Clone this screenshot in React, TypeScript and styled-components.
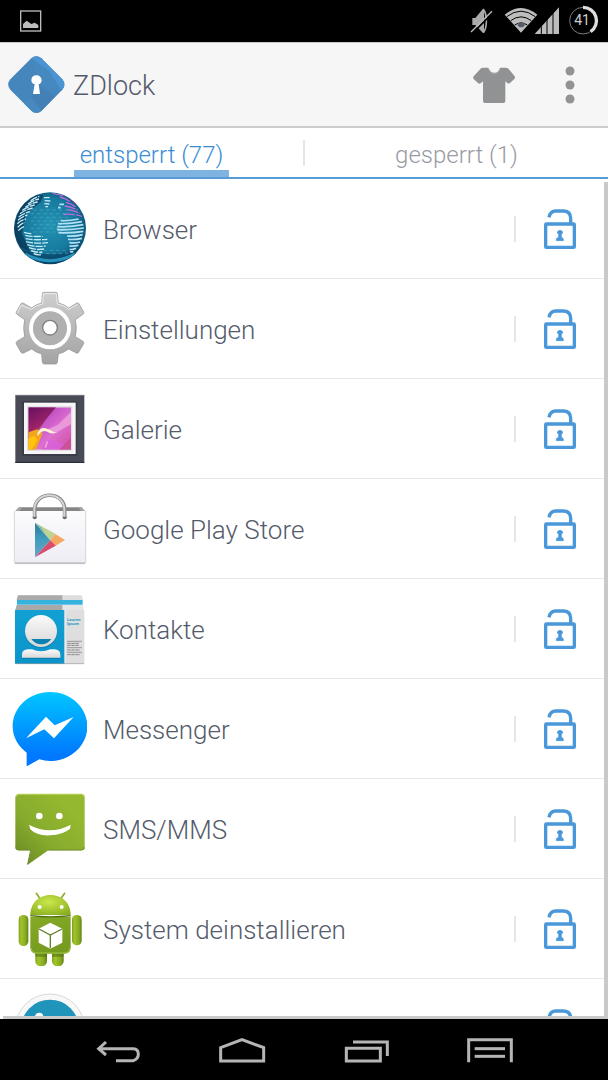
import React from 'react';
import styled, { createGlobalStyle } from 'styled-components';

const GlobalStyle = createGlobalStyle`
  *, *::before, *::after { box-sizing: border-box; }
  body { margin: 0; background: #fff; font-family: Roboto, 'Liberation Sans', sans-serif; font-weight: 300; }
  button { font: inherit; color: inherit; background: none; border: 0; padding: 0; cursor: pointer; }
  svg { display: block; flex: none; }
`;

const Screen = styled.div`
  display: flex;
  flex-direction: column;
  height: 100vh;
  overflow: hidden;
`;

const StatusBar = styled.div`
  display: flex;
  flex: none;
  align-items: center;
  justify-content: space-between;
  height: 42px;
  padding: 0 8px 0 20px;
  background: #000;
`;

const Header = styled.header`
  display: flex;
  flex: none;
  align-items: center;
  height: 86px;
  padding-left: 8px;
  background: #f6f6f6;
  border-top: 1px solid #c9c9c9;
  border-bottom: 2px solid #ccc;
`;

const Title = styled.h1`
  flex: 1;
  margin: 0;
  padding: 3px 0 0 8px;
  font-size: 27px;
  line-height: 32px;
  font-weight: 300;
  color: #545b6b;
`;

const HeaderButton = styled.button`
  display: flex;
  align-items: center;
  justify-content: center;
  width: 76px;
  height: 76px;
`;

const Tabs = styled.nav`
  display: flex;
  flex: none;
  align-items: stretch;
  height: 51px;
  border-bottom: 2px solid #559bd8;
`;

const Tab = styled.button`
  display: flex;
  flex: 1;
  justify-content: center;
`;

const TabLabel = styled.span<{ $active?: boolean }>`
  height: 49px;
  padding: 11px 6px 0;
  font-size: 24px;
  line-height: 32px;
  color: ${(p) => (p.$active ? '#3a8dd4' : '#989ba3')};
  border-bottom: 7px solid ${(p) => (p.$active ? '#80b4e0' : 'transparent')};
`;

const Separator = styled.span`
  flex: none;
  align-self: center;
  width: 2px;
  height: 26px;
  background: #e6e6e6;
`;

const ListArea = styled.main`
  display: flex;
  flex: 1;
  min-height: 0;
`;

const AppList = styled.ul`
  flex: 1;
  margin: 0;
  padding: 0;
  list-style: none;
  overflow: hidden;
`;

const Row = styled.li`
  display: flex;
  align-items: center;
  height: 100px;
  padding-left: 12px;
  border-bottom: 1px solid #e8e8e8;
`;

const AppName = styled.span`
  flex: 1;
  padding: 3px 0 0 16px;
  font-size: 26px;
  line-height: 32px;
  color: #545b6b;
`;

const LockButton = styled.button`
  display: flex;
  align-items: center;
  justify-content: center;
  width: 88px;
  height: 80px;
`;

const ScrollTrack = styled.div`
  flex: none;
  width: 4px;
  margin-top: 3px;
  background: #c9c9c9;
`;

const ListEdge = styled.div`
  flex: none;
  height: 3px;
  margin-left: 3px;
  background: #c9c9c9;
`;

const NavBar = styled.footer`
  display: flex;
  flex: none;
  height: 61px;
  padding: 3px 56px 0;
  background: #000;
`;

const NavButton = styled.button`
  display: flex;
  flex: 1;
  align-items: center;
  justify-content: center;
`;

const AppIcon = ({ children }: { children: React.ReactNode }) => (
  <svg width="75" height="75" viewBox="36 33 225 225" aria-hidden="true">{children}</svg>
);

const westLand = [
  'M92 62Q105 52 118 49', 'M84 72Q100 60 117 57', 'M76 82Q92 69 113 66', 'M67 91Q84 79 104 75',
  'M60 101Q78 88 98 84', 'M56 111Q72 99 90 95', 'M54 121Q66 110 82 105', 'M52 131Q64 120 78 117',
  'M53 142Q62 131 74 127', 'M55 152Q62 144 72 140', 'M72 157Q86 161 96 161', 'M76 166Q98 171 128 169',
  'M77 176Q102 181 142 178', 'M78 185Q104 192 144 188', 'M82 194Q104 202 137 198', 'M87 203Q108 211 132 207',
  'M93 212Q110 219 127 216', 'M101 221Q112 226 124 224', 'M132 53L149 53', 'M134 62L151 63', 'M133 71L148 72',
  'M136 80L144 80',
];
const eastLand = [
  'M182 122Q208 123 236 117', 'M174 131Q212 132 246 125', 'M172 140Q212 142 250 134', 'M171 149Q212 151 252 144',
  'M175 158Q214 160 250 154', 'M201 168Q226 170 248 164', 'M204 178Q226 180 246 175', 'M208 188Q226 190 240 186',
  'M208 198Q222 199 235 196', 'M209 208Q218 210 228 205', 'M210 216L220 215', 'M178 73L192 73', 'M174 83L182 83',
];
const pinkLand = [
  'M158 40Q175 42 190 48', 'M180 51Q198 56 209 64', 'M198 67Q214 70 226 80', 'M194 78Q212 80 233 90',
  'M202 89Q222 91 240 100', 'M190 103Q222 101 245 109',
];
const seaRows = [90, 101, 112, 123, 134, 145, 156, 211, 220];

const GlobeIcon = () => (
  <AppIcon>
    <defs>
      <radialGradient id="globe" cx="0.5" cy="0.45" r="0.56">
        <stop offset="0" stopColor="#2494b4" />
        <stop offset="0.65" stopColor="#177a9e" />
        <stop offset="1" stopColor="#0b4769" />
      </radialGradient>
      <clipPath id="globeClip"><circle cx="150" cy="145" r="107" /></clipPath>
    </defs>
    <circle cx="150" cy="145" r="108" fill="url(#globe)" />
    <g clipPath="url(#globeClip)" fill="none">
      <path d="M100 45L130 45 122 66 80 100 66 160 90 215 60 200 38 150 60 80Z" fill="#082d4c" opacity=".6" />
      <path d="M52 205Q150 242 248 205L220 250 150 262 80 250Z" fill="#083f63" opacity=".6" />
      <path d="M75 222Q150 262 225 222" stroke="#2da5cf" strokeWidth="9" opacity=".8" />
      {seaRows.map((y) => (
        <path key={y} d={`M${y % 2 ? 92 : 100} ${y}H205`} stroke="#51b3ca" strokeWidth="3" strokeDasharray="10 9" opacity=".55" />
      ))}
      {westLand.map((d) => <path key={d} d={d} stroke="#c6eaf7" strokeWidth="4" strokeDasharray="22 3" />)}
      {eastLand.map((d) => <path key={d} d={d} stroke="#b2e0f5" strokeWidth="5" />)}
      {pinkLand.map((d) => <path key={d} d={d} stroke="#c668e0" strokeWidth="4" strokeDasharray="34 4" />)}
      <path d="M176 38Q208 46 228 72" stroke="#c02bc4" strokeWidth="5" />
    </g>
  </AppIcon>
);

const GearIcon = () => (
  <AppIcon>
    <defs>
      <linearGradient id="gear" x1="0" y1="0" x2="0" y2="1">
        <stop offset="0" stopColor="#cfcfcf" />
        <stop offset="1" stopColor="#a3a3a3" />
      </linearGradient>
    </defs>
    <path
      d="M127 41Q127 37 131 37H168Q172 37 172 41L175 69Q192 72 206 84L229 70Q234 67 237 71L251 96Q253 101 249 103L226 119Q232 145 226 170L249 184Q253 187 251 191L236 217Q233 221 229 219L206 207Q192 218 175 222L172 247Q171 252 167 252H132Q128 252 127 247L125 222Q108 218 95 207L71 219Q66 221 63 217L49 192Q47 187 51 184L74 170Q68 145 74 119L51 103Q47 100 49 96L63 71Q66 67 71 70L95 84Q108 72 125 69Z"
      fill="url(#gear)" stroke="#8e8e8e" strokeWidth="2"
    />
    <path d="M130 41H169L172 72Q192 75 206 88L232 73M52 99L63 76 94 88Q108 75 128 72L130 41" fill="none" stroke="#ededed" strokeWidth="3" />
    <circle cx="150" cy="145" r="57" fill="#b5b5b5" stroke="#fff" strokeWidth="12" />
    <circle cx="150" cy="145" r="50" fill="#b0b0b0" />
    <circle cx="150" cy="143" r="22" fill="#fff" stroke="#808080" strokeWidth="4" />
  </AppIcon>
);

const GalleryIcon = () => (
  <AppIcon>
    <defs>
      <linearGradient id="photo" x1="0" y1="0" x2="1" y2="1">
        <stop offset="0.3" stopColor="#bf4fc4" />
        <stop offset="0.6" stopColor="#dd6fd0" />
        <stop offset="1" stopColor="#cf4d9e" />
      </linearGradient>
      <linearGradient id="photoDark" x1="0" y1="0" x2="0.5" y2="1">
        <stop offset="0" stopColor="#65105f" />
        <stop offset="0.6" stopColor="#9c2368" />
        <stop offset="1" stopColor="#ee7b3c" />
      </linearGradient>
      <clipPath id="photoClip"><rect x="85" y="82" width="128" height="127" /></clipPath>
    </defs>
    <rect x="46" y="45" width="207" height="204" rx="2" fill="#484b56" />
    <path d="M46 46H253" stroke="#777b84" strokeWidth="3" />
    <path d="M46 247H253" stroke="#2d3039" strokeWidth="4" />
    <rect x="66" y="64" width="166" height="164" fill="#3a3d47" />
    <rect x="72" y="68" width="155" height="154" fill="#f6f6f6" />
    <rect x="81" y="78" width="136" height="135" fill="#e2e2e2" />
    <g clipPath="url(#photoClip)">
      <rect x="85" y="82" width="128" height="127" fill="url(#photo)" />
      <path d="M85 82H168L137 119 112 155 85 180Z" fill="url(#photoDark)" />
      <path d="M85 157L112 148 128 160 118 184 108 209H85Z" fill="#f3a51e" />
      <path d="M85 175L103 168 112 181 94 209H85Z" fill="#ffc609" />
      <path d="M213 96L174 134 144 148 160 163 213 133Z" fill="#efabdf" opacity=".7" />
      <path d="M112 160Q122 139 137 145T160 155 178 154Q161 163 148 158 132 147 120 159L113 169Z" fill="#fff6d1" />
      <path d="M133 188Q148 172 168 184T197 185L213 168V209H126Z" fill="#d763dc" opacity=".8" />
      <path d="M142 184L136 203" stroke="#f5a4da" strokeWidth="5" />
      <path d="M213 170L195 190 178 209H213Z" fill="#c84676" opacity=".6" />
    </g>
  </AppIcon>
);

const PlayIcon = () => (
  <AppIcon>
    <defs>
      <linearGradient id="bag" x1="0" y1="0" x2="0" y2="1">
        <stop offset="0" stopColor="#fbfbfd" />
        <stop offset="1" stopColor="#eeedf4" />
      </linearGradient>
      <linearGradient id="playBlue" x1="0" y1="0" x2="0" y2="1">
        <stop offset="0" stopColor="#2b7ca0" />
        <stop offset="0.5" stopColor="#439dbd" />
        <stop offset="1" stopColor="#69a4c9" />
      </linearGradient>
    </defs>
    <path d="M57 81H245L257 95H43Z" fill="#a5a5a5" />
    <path d="M66 84H236L243 93H57Z" fill="#858585" />
    <path d="M43 93H257V247Q257 251 253 251H47Q43 251 43 247Z" fill="url(#bag)" />
    <path d="M43 93V247Q43 251 47 251H253Q257 251 257 247V93" fill="none" stroke="#c7c6cc" strokeWidth="2" />
    <path d="M45 249H255" stroke="#aaa9b0" strokeWidth="3" />
    <circle cx="104" cy="112" r="6" fill="#6d6d6d" />
    <circle cx="194" cy="112" r="6" fill="#6d6d6d" />
    <path d="M104 110V90C104 31 194 31 194 90V110" fill="none" stroke="#858585" strokeWidth="11" />
    <path d="M103 110V90C103 31 193 31 193 90V110" fill="none" stroke="#d5d5d5" strokeWidth="6" />
    <path d="M105 128L151 181 105 232Z" fill="url(#playBlue)" />
    <path d="M105 128L166 161 151 181Z" fill="#bed391" />
    <path d="M105 128L151 181 137 164 123 140Z" fill="#80bdb0" />
    <path d="M166 162L195 180 166 198 151 181Z" fill="#f5a863" />
    <path d="M105 232L151 181 167 197Z" fill="#d94c6b" />
  </AppIcon>
);

const ContactsIcon = () => (
  <AppIcon>
    <defs>
      <linearGradient id="card" x1="0" y1="0" x2="0" y2="1">
        <stop offset="0" stopColor="#12a0d2" />
        <stop offset="1" stopColor="#0c94ca" />
      </linearGradient>
      <linearGradient id="person" x1="0" y1="0" x2="0" y2="1">
        <stop offset="0" stopColor="#fafafa" />
        <stop offset="1" stopColor="#d7d7d7" />
      </linearGradient>
    </defs>
    <path d="M54 46H245L249 60H50Z" fill="#dedede" />
    <path d="M54 46H187V60H50Z" fill="#ababab" />
    <path d="M51 60H248V74H51Z" fill="#35b3df" />
    <path d="M50 75H248L252 91H46Z" fill="#e5e5e5" />
    <path d="M50 75H187V91H46Z" fill="#a9a9a9" />
    <rect x="45" y="90" width="208" height="162" rx="3" fill="#dedede" />
    <path d="M45 90H194V252H48Q45 252 45 249Z" fill="url(#card)" />
    <path d="M195 90V250" stroke="#f4f4f4" strokeWidth="3" />
    <path d="M46 251H252" stroke="#a0a0a0" strokeWidth="2" />
    <circle cx="123" cy="156" r="49" fill="#0879a8" opacity=".6" />
    <circle cx="123" cy="153" r="48" fill="url(#person)" />
    <path d="M94 177H154Q143 193 124 193T94 177Z" fill="#0d81b1" />
    <path d="M66 234V224Q66 209 84 208H96Q123 220 151 208H163Q181 209 181 224V234Z" fill="url(#person)" />
    <path d="M66 235H181" stroke="#087aa8" strokeWidth="3" />
    <text x="201" y="122" fontSize="13" fontWeight="700" fill="#2a9cc7">Lauren</text>
    <text x="201" y="136" fontSize="13" fontWeight="700" fill="#2a9cc7">Ipsum</text>
    <path d="M201 184H246M201 203H246M201 217H246" stroke="#777" strokeWidth="2" />
    <path d="M202 190H238M202 196H236M202 210H240M202 224H240" stroke="#858585" strokeWidth="3" strokeDasharray="10 2" />
  </AppIcon>
);

const MessengerIcon = () => (
  <AppIcon>
    <defs>
      <linearGradient id="messenger" x1="0" y1="0" x2="0" y2="1">
        <stop offset="0" stopColor="#00c6ff" />
        <stop offset="0.85" stopColor="#0078ff" />
      </linearGradient>
    </defs>
    <path d="M150 36C88 36 38 82 38 139C38 171 54 199 80 218V259L118 238Q134 243 150 243C212 243 262 196 262 139S212 36 150 36Z" fill="url(#messenger)" />
    <path d="M78 175L138 110 164 136 221 111 162 175 133 148Z" fill="#fff" />
  </AppIcon>
);

const SmsIcon = () => (
  <AppIcon>
    <defs>
      <linearGradient id="sms" x1="1" y1="0" x2="0" y2="1">
        <stop offset="0.2" stopColor="#94b82f" />
        <stop offset="0.6" stopColor="#87ab2d" />
        <stop offset="1" stopColor="#668522" />
      </linearGradient>
    </defs>
    <path d="M55 44H245Q254 44 254 53V201Q254 211 245 211H145L82 255 93 211H55Q46 211 46 201V53Q46 44 55 44Z" fill="url(#sms)" />
    <path d="M48 50Q50 43 56 43H245Q251 43 253 50" fill="none" stroke="#b4cf50" strokeWidth="4" />
    <path d="M47 202Q48 210 56 210H92L83 253M145 210H245Q253 210 253 202" fill="none" stroke="#718d2d" strokeWidth="3" />
    <circle cx="118" cy="108" r="10" fill="#fff" />
    <circle cx="178" cy="108" r="10" fill="#fff" />
    <path d="M87 134Q150 168 212 134L210 146Q190 164 150 166T91 148Z" fill="#fff" />
  </AppIcon>
);

const AndroidIcon = () => (
  <AppIcon>
    <defs>
      <linearGradient id="droid" x1="0" y1="0" x2="1" y2="0">
        <stop offset="0" stopColor="#7d9f1c" />
        <stop offset="0.25" stopColor="#a0c52b" />
        <stop offset="0.75" stopColor="#85a81f" />
        <stop offset="1" stopColor="#5f7d15" />
      </linearGradient>
      <radialGradient id="droidHead" cx="0.45" cy="0.35" r="0.75">
        <stop offset="0" stopColor="#cbe84b" />
        <stop offset="1" stopColor="#88ad1f" />
      </radialGradient>
      <linearGradient id="droidBody" x1="0" y1="0" x2="0.3" y2="1">
        <stop offset="0" stopColor="#86aa26" />
        <stop offset="1" stopColor="#759b1f" />
      </linearGradient>
    </defs>
    <path d="M109 40L122 59M194 40L180 59" stroke="#8cac2b" strokeWidth="5" strokeLinecap="round" />
    <rect x="106" y="205" width="35" height="54" rx="16" fill="url(#droid)" />
    <rect x="156" y="205" width="35" height="54" rx="16" fill="url(#droid)" />
    <path d="M106 220H141V230H106ZM156 220H191V230H156Z" fill="#4c6712" opacity=".55" />
    <rect x="56" y="105" width="29" height="93" rx="14" fill="url(#droid)" />
    <rect x="216" y="105" width="29" height="91" rx="14" fill="url(#droid)" />
    <path d="M91 110H212V202Q212 221 193 221H110Q91 221 91 202Z" fill="url(#droidBody)" />
    <path d="M93 204Q95 218 110 219H193Q208 218 210 204" fill="none" stroke="#a3c743" strokeWidth="3" />
    <path d="M91 105C91 25 212 25 212 105Z" fill="url(#droidHead)" />
    <path d="M91 107Q150 114 212 107" fill="none" stroke="#516f15" strokeWidth="4" />
    <circle cx="119" cy="81" r="6" fill="#fff" />
    <circle cx="185" cy="81" r="6" fill="#fff" />
    <path d="M151 128L187 146V188L151 206 116 188V146Z" fill="#fff" />
    <path d="M117 147L151 165 186 147M151 165V204" fill="none" stroke="#5f7f20" strokeWidth="4" />
  </AppIcon>
);

const DiscIcon = () => (
  <AppIcon>
    <circle cx="150" cy="146" r="104" fill="#f8f8f8" stroke="#d8d8d8" strokeWidth="3" />
    <circle cx="150" cy="146" r="87" fill="#2094bb" />
    <path d="M104 112Q106 98 118 98T130 112Z" fill="#fff" />
  </AppIcon>
);

const LockIcon = () => (
  <svg width="32" height="40" viewBox="161 115 96 120" aria-hidden="true">
    <rect x="166" y="160" width="86" height="70" rx="2" fill="none" stroke="#4a98d9" strokeWidth="10" />
    <path d="M176 140Q180 121 196 121H218Q241 121 241 143V157" fill="none" stroke="#4a98d9" strokeWidth="10" />
    <path d="M205 191Q200 188 201 184 203 179 209 179T217 184Q218 188 213 191V199L219 204V210H198V204L205 199Z" fill="#4a98d9" stroke="#4a98d9" strokeWidth="2" />
  </svg>
);

const LogoIcon = () => (
  <svg width="57" height="57" viewBox="23 171 171 171" aria-hidden="true">
    <defs>
      <clipPath id="logoClip">
        <path d="M93 178Q108 165 123 178L186 241Q199 256 186 272L124 335Q108 348 93 335L30 272Q17 256 30 241Z" />
      </clipPath>
    </defs>
    <g clipPath="url(#logoClip)">
      <rect x="20" y="165" width="180" height="185" fill="#4586bd" />
      <path d="M93 171H125L200 256 184 276 145 215 96 180Z" fill="#4b93d2" />
      <path d="M96 180L145 215 183 276 108 256Z" fill="#4688c0" />
      <path d="M108 256L92 295 70 316 108 350 126 335Z" fill="#488abf" />
      <path d="M92 295L124 335 165 292 108 256Z" fill="#4380b5" />
    </g>
    <path d="M103 256Q93 253 93 243 94 229 108 229T124 243Q124 253 115 256L119 285H98Z" fill="#fff" />
  </svg>
);

const ShirtIcon = () => (
  <svg width="42" height="38" viewBox="507 198 126 114" aria-hidden="true">
    <path d="M537 203H553Q557 218 571 218T588 203H605Q610 203 614 207L632 229Q635 233 631 237L618 249Q614 252 610 249L604 244V303Q604 309 598 309H543Q537 309 537 303V244L531 249Q526 253 522 249L509 237Q506 233 509 229L529 207Q532 203 537 203Z" fill="#919294" />
    <path d="M555 207Q560 221 571 222T587 207" fill="none" stroke="#b4b5b6" strokeWidth="2" />
  </svg>
);

const MoreIcon = () => (
  <svg width="10" height="40" viewBox="0 0 10 40" fill="#939393" aria-hidden="true">
    <circle cx="5" cy="6" r="4.5" />
    <circle cx="5" cy="20" r="4.5" />
    <circle cx="5" cy="34" r="4.5" />
  </svg>
);

const PictureIcon = () => (
  <svg width="22" height="22" viewBox="0 0 66 66" aria-hidden="true">
    <rect x="2" y="3" width="60" height="60" fill="none" stroke="#bdbdbd" strokeWidth="4" />
    <path d="M9 54V42L20 32 34 42 44 38 55 45V54Z" fill="#bdbdbd" />
  </svg>
);

const StatusIcons = () => (
  <svg width="131" height="32" viewBox="495 15 393 96" role="img" aria-label="Status">
    <path d="M505 54H514L537 26H540V99H537L514 75H505Z" fill="#aaa" />
    <path d="M538 28C550 42 550 84 538 98" fill="none" stroke="#aaa" strokeWidth="5" />
    <path d="M505 100L568 37" stroke="#000" strokeWidth="5" />
    <path d="M501 96L564 34" stroke="#bcbcbc" strokeWidth="4" />
    <path d="M651 98L602 44Q651 4 700 44Z" fill="#bdbdbd" />
    <path d="M608 50Q651 17 694 50M620 62Q651 39 682 62M632 75Q651 62 670 75" fill="none" stroke="#000" strokeWidth="3" />
    <path d="M641 69H662V76L657 82H646L641 76Z" fill="#555d6c" />
    <path d="M692 102L765 22V102Z" fill="#bdbdbd" />
    <path d="M712 70V103M729 52V103M747 34V103" stroke="#000" strokeWidth="3" />
    <circle cx="837" cy="62" r="40" fill="none" stroke="#777d84" strokeWidth="3" />
    <path d="M837 22A40 40 0 0 1 860 95" fill="none" stroke="#dedede" strokeWidth="10" />
    <text x="834" y="76" textAnchor="middle" fontSize="42" fontWeight="400" fill="#d0d0d0">41</text>
  </svg>
);

const navIcons = [
  { label: 'Zurück', box: '282 471 144 84', paths: ['M296 506H400Q415 507 415 522T400 542H348', 'M318 486L296 506 318 525'] },
  { label: 'Start', box: '114 171 144 84', paths: ['M122 203L186 179 251 203V243H122Z'] },
  { label: 'Letzte Apps', box: '486 171 144 84', paths: ['M499 205H601V243H499Z', 'M519 186H622V228'] },
  { label: 'Menü', box: '858 171 144 84', paths: ['M866 247V179H994V247', 'M884 206H975', 'M884 229H975'] },
];

const apps = [
  { id: 'browser', name: 'Browser', Icon: GlobeIcon },
  { id: 'settings', name: 'Einstellungen', Icon: GearIcon },
  { id: 'gallery', name: 'Galerie', Icon: GalleryIcon },
  { id: 'play', name: 'Google Play Store', Icon: PlayIcon },
  { id: 'contacts', name: 'Kontakte', Icon: ContactsIcon },
  { id: 'messenger', name: 'Messenger', Icon: MessengerIcon },
  { id: 'sms', name: 'SMS/MMS', Icon: SmsIcon },
  { id: 'uninstall', name: 'System deinstallieren', Icon: AndroidIcon },
  { id: 'next', name: '', Icon: DiscIcon },
];

export default function App() {
  return (
    <Screen>
      <GlobalStyle />
      <StatusBar>
        <PictureIcon />
        <StatusIcons />
      </StatusBar>
      <Header>
        <LogoIcon />
        <Title>ZDlock</Title>
        <HeaderButton aria-label="Design"><ShirtIcon /></HeaderButton>
        <HeaderButton aria-label="Mehr"><MoreIcon /></HeaderButton>
      </Header>
      <Tabs>
        <Tab><TabLabel $active>entsperrt (77)</TabLabel></Tab>
        <Separator />
        <Tab><TabLabel>gesperrt (1)</TabLabel></Tab>
      </Tabs>
      <ListArea>
        <AppList>
          {apps.map(({ id, name, Icon }) => (
            <Row key={id}>
              <Icon />
              <AppName>{name}</AppName>
              <Separator />
              <LockButton aria-label={`${name} sperren`.trim()}><LockIcon /></LockButton>
            </Row>
          ))}
        </AppList>
        <ScrollTrack />
      </ListArea>
      <ListEdge />
      <NavBar>
        {navIcons.map(({ label, box, paths }) => (
          <NavButton key={label} aria-label={label}>
            <svg width="48" height="28" viewBox={box} fill="none" stroke="#b5b5b5" strokeWidth="9" aria-hidden="true">
              {paths.map((d) => <path key={d} d={d} />)}
            </svg>
          </NavButton>
        ))}
      </NavBar>
    </Screen>
  );
}
